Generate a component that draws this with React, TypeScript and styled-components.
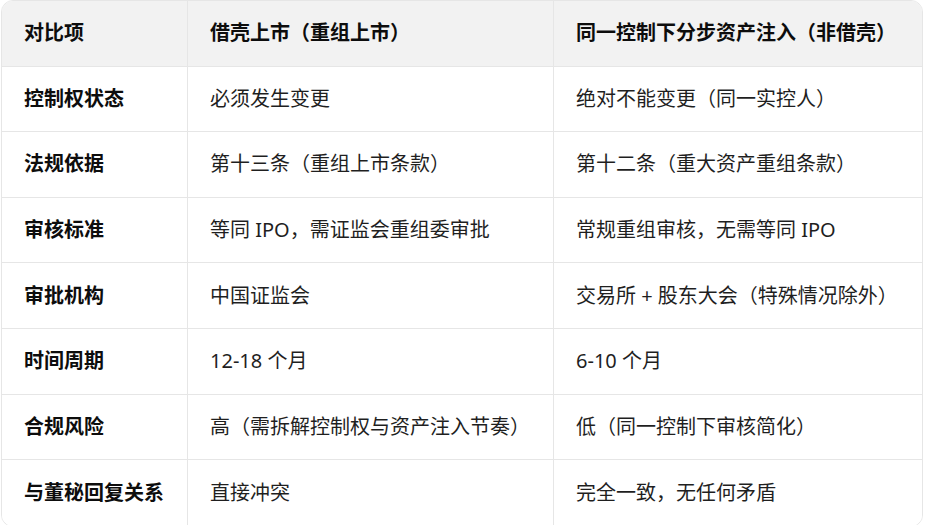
import React from "react";
import styled, { createGlobalStyle } from "styled-components";

const Global = createGlobalStyle`
  html, body { margin: 0; padding: 0; background: #fff; }
  body { font-family: "Noto Sans", "Noto Sans CJK SC", sans-serif; }
`;

const Wrap = styled.div`
  padding: 0 0 0 1px;
`;

const Table = styled.div`
  width: 922px;
  box-sizing: border-box;
  border: 1px solid #e6e6e6;
  border-radius: 12px;
  overflow: hidden;
  display: grid;
  grid-template-columns: 186px 366px 1fr;
  grid-auto-rows: 65.6px;
`;

const Cell = styled.div<{ $head?: boolean; $bold?: boolean; $last?: boolean; $bottom?: boolean }>`
  box-sizing: border-box;
  display: flex;
  align-items: center;
  padding: 0 22px;
  font-size: 20px;
  line-height: 1.4;
  white-space: nowrap;
  background: ${(p) => (p.$head ? "#f2f2f2" : "#fff")};
  color: ${(p) => (p.$head || p.$bold ? "#0d0d0d" : "#1f1f1f")};
  font-weight: ${(p) => (p.$head || p.$bold ? 700 : 400)};
  border-right: ${(p) => (p.$last ? "none" : "1px solid #e6e6e6")};
  border-bottom: ${(p) => (p.$bottom ? "none" : "1px solid #e6e6e6")};
`;

const head = ["对比项", "借壳上市（重组上市）", "同一控制下分步资产注入（非借壳）"];
const rows: [string, string, string][] = [
  ["控制权状态", "必须发生变更", "绝对不能变更（同一实控人）"],
  ["法规依据", "第十三条（重组上市条款）", "第十二条（重大资产重组条款）"],
  ["审核标准", "等同 IPO，需证监会重组委审批", "常规重组审核，无需等同 IPO"],
  ["审批机构", "中国证监会", "交易所 + 股东大会（特殊情况除外）"],
  ["时间周期", "12-18 个月", "6-10 个月"],
  ["合规风险", "高（需拆解控制权与资产注入节奏）", "低（同一控制下审核简化）"],
  ["与董秘回复关系", "直接冲突", "完全一致，无任何矛盾"],
];

export default function App() {
  return (
    <Wrap>
      <Global />
      <Table>
        {head.map((h, i) => (
          <Cell key={h} $head $last={i === 2}>
            {h}
          </Cell>
        ))}
        {rows.map((r, ri) =>
          r.map((c, ci) => (
            <Cell
              key={`${ri}-${ci}`}
              $bold={ci === 0}
              $last={ci === 2}
              $bottom={ri === rows.length - 1}
            >
              {c}
            </Cell>
          ))
        )}
      </Table>
    </Wrap>
  );
}
